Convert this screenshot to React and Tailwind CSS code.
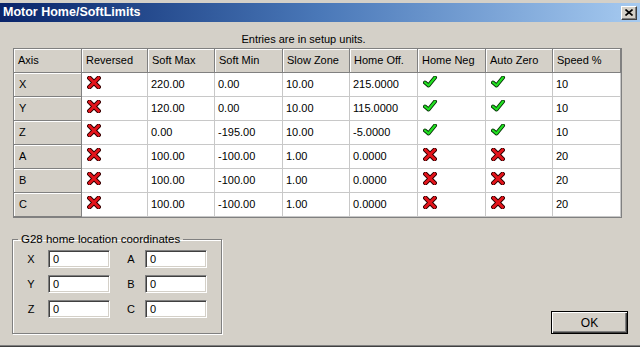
import React from "react";

const columns = [
  { name: "Axis", w: "w-[68px]" },
  { name: "Reversed", w: "w-[66px]" },
  { name: "Soft Max", w: "w-[67px]" },
  { name: "Soft Min", w: "w-[68px]" },
  { name: "Slow Zone", w: "w-[67px]" },
  { name: "Home Off.", w: "w-[68px]" },
  { name: "Home Neg", w: "w-[68px]" },
  { name: "Auto Zero", w: "w-[67px]" },
  { name: "Speed %", w: "w-[68px]" },
];

const rows = [
  ["X", false, "220.00", "0.00", "10.00", "215.0000", true, true, "10"],
  ["Y", false, "120.00", "0.00", "10.00", "115.0000", true, true, "10"],
  ["Z", false, "0.00", "-195.00", "10.00", "-5.0000", true, true, "10"],
  ["A", false, "100.00", "-100.00", "1.00", "0.0000", false, false, "20"],
  ["B", false, "100.00", "-100.00", "1.00", "0.0000", false, false, "20"],
  ["C", false, "100.00", "-100.00", "1.00", "0.0000", false, false, "20"],
];

function Cross() {
  return (
    <svg width="14" height="13" viewBox="0 0 14 13">
      <path d="M2.5 2 L11.5 11 M11.5 2 L2.5 11" stroke="#2a0000" strokeWidth="4.6" strokeLinecap="square" />
      <path d="M2.5 2 L11.5 11 M11.5 2 L2.5 11" stroke="#e4141b" strokeWidth="2.8" strokeLinecap="square" />
    </svg>
  );
}

function Check() {
  return (
    <svg width="15" height="12" viewBox="0 0 15 12">
      <path d="M2 6.5 L5.5 9.5 L12 1.5" fill="none" stroke="#063006" strokeWidth="4" strokeLinejoin="round" strokeLinecap="round" />
      <path d="M2 6.5 L5.5 9.5 L12 1.5" fill="none" stroke="#22e022" strokeWidth="2.2" strokeLinejoin="round" strokeLinecap="round" />
    </svg>
  );
}

function Cell({ value, col, grey }) {
  const w = columns[col].w;
  if (grey) {
    return (
      <div className={`${w} h-[24px] flex items-center pl-[5px] bg-[#d4d0c8] border-r border-b border-[#808080] shadow-[inset_1px_1px_0_#fff]`}>
        {value}
      </div>
    );
  }
  if (typeof value === "boolean") {
    return (
      <div className={`${w} h-[24px] flex items-start pl-[5px] pt-[3px] bg-white border-r border-b border-[#c8c8c8]`}>
        {value ? <Check /> : <Cross />}
      </div>
    );
  }
  return (
    <div className={`${w} h-[24px] flex items-center pl-[3px] bg-white border-r border-b border-[#c8c8c8]`}>
      {value}
    </div>
  );
}

function Field({ value }) {
  return (
    <div className="w-[62px] h-[18px] bg-white border border-t-[#808080] border-l-[#808080] border-r-white border-b-white shadow-[inset_1px_1px_0_#404040,inset_-1px_-1px_0_#d4d0c8] flex items-center pl-[4px]">
      {value}
    </div>
  );
}

export default function App() {
  return (
    <div className="w-[640px] h-[347px] bg-[#d4d0c8] flex flex-col overflow-hidden text-[11px] text-black font-['Liberation_Sans',Arial,sans-serif]">
      <div className="h-[3px] shrink-0" />
      <div className="h-[19px] shrink-0 bg-linear-to-r from-[#0a246a] via-[#4a78b8] to-[#a6caf0] flex items-center justify-between pl-[3px] pr-[3px]">
        <span className="text-white font-bold text-[12.5px]">Motor Home/SoftLimits</span>
        <div className="w-[16px] h-[14px] bg-[#d4d0c8] border border-t-white border-l-white border-r-[#404040] border-b-[#404040] shadow-[inset_-1px_-1px_0_#808080] flex items-center justify-center">
          <svg width="8" height="7" viewBox="0 0 8 7">
            <path d="M0.5 0.5 L7.5 6.5 M7.5 0.5 L0.5 6.5" stroke="#000" strokeWidth="1.6" />
          </svg>
        </div>
      </div>

      <div className="flex-1 flex flex-col pl-[12px] pr-[12px]">
        <div className="h-[26px] w-[610px] flex items-end justify-center pr-[27px] pb-[1px]">
          Entries are in setup units.
        </div>

        <div className="ml-[1px] w-[609px] h-[170px] border border-[#808080] bg-[#d4d0c8]">
          <div className="flex">
            {columns.map((c) => (
              <div
                key={c.name}
                className={`${c.w} h-[24px] flex items-center pl-[4px] bg-[#d4d0c8] border-r border-b border-[#808080] shadow-[inset_1px_1px_0_#fff]`}
              >
                {c.name}
              </div>
            ))}
          </div>
          {rows.map((r) => (
            <div key={r[0]} className="flex">
              {r.map((v, i) => (
                <Cell key={i} value={v} col={i} grey={i === 0} />
              ))}
            </div>
          ))}
        </div>

        <div className="mt-[14px] flex items-end justify-between">
          <fieldset className="w-[210px] h-[102px] border border-[#808080] shadow-[inset_1px_1px_0_#fff,1px_1px_0_#fff]">
            <legend className="ml-[5px] px-[3px] leading-[14px] text-[11.5px]">G28 home location coordinates</legend>
            <div className="flex flex-col gap-[7px] pl-[9px] pt-[4px]">
              {[["X", "A"], ["Y", "B"], ["Z", "C"]].map(([a, b]) => (
                <div key={a} className="flex items-center">
                  <span className="w-[18px] text-center">{a}</span>
                  <div className="ml-[8px]">
                    <Field value="0" />
                  </div>
                  <span className="ml-[12px] w-[18px] text-center">{b}</span>
                  <div className="ml-[5px]">
                    <Field value="0" />
                  </div>
                </div>
              ))}
            </div>
          </fieldset>

          <button className="w-[77px] h-[23px] border border-black bg-[#d4d0c8] shadow-[inset_1px_1px_0_#fff,inset_-1px_-1px_0_#404040,inset_-2px_-2px_0_#808080] text-[12px] flex items-center justify-center">
            OK
          </button>
        </div>
      </div>

      <div className="h-[1px] shrink-0 bg-[#808080]" />
      <div className="h-[1px] shrink-0 bg-[#404040]" />
    </div>
  );
}
